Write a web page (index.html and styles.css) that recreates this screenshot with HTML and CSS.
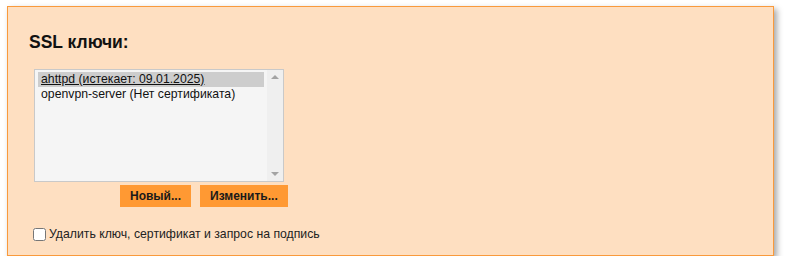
FILE: index.html
```html
<!DOCTYPE html>
<html lang="ru">
<head>
  <meta charset="UTF-8">
  <title>SSL ключи</title>
  <link rel="stylesheet" href="styles.css">
</head>
<body>

  <div class="panel">
    <h2>SSL ключи:</h2>

    <div class="keys">
      <div class="listbox">
        <ul class="options">
          <li class="option selected">ahttpd (истекает: 09.01.2025)</li>
          <li class="option">openvpn-server (Нет сертификата)</li>
        </ul>
        <div class="scrollbar">
          <span class="arrow up"></span>
          <span class="arrow down"></span>
        </div>
      </div>

      <div class="buttons">
        <button class="btn">Новый...</button>
        <button class="btn">Изменить...</button>
      </div>

      <label class="check">
        <input type="checkbox">
        Удалить ключ, сертификат и запрос на подпись
      </label>
    </div>
  </div>

</body>
</html>
```

FILE: styles.css
```css
body {
  margin: 0;
  font-family: "Liberation Sans", Arial, sans-serif;
  background: #fff;
}

.panel {
  box-sizing: border-box;
  width: 767px;
  height: 250px;
  margin: 6px 0 0 7px;
  padding: 24px 21px 0 21px;
  background-color: #fedfc1;
  border: 1px solid #f99a3c;
  box-shadow: 3px 3px 6px rgba(0, 0, 0, 0.35);
}

.panel h2 {
  margin: 0;
  font-size: 17.5px;
  line-height: 22px;
  font-weight: bold;
  color: #111;
}

.keys {
  margin: 16px 0 0 5px;
}

.listbox {
  display: flex;
  width: 250px;
  height: 113px;
  box-sizing: border-box;
  border: 1px solid #c9c9c9;
  background-color: #f5f5f5;
}

.options {
  flex: 1;
  list-style: none;
  margin: 0;
  padding: 2px 3px 0 3px;
}

.option {
  height: 15px;
  padding-left: 3px;
  font-size: 12.25px;
  line-height: 15px;
  color: #111;
  white-space: nowrap;
}

.option.selected {
  background-color: #cdcdcd;
  text-decoration: underline;
}

.scrollbar {
  width: 16px;
  display: flex;
  flex-direction: column;
  justify-content: space-between;
  align-items: center;
  padding: 5px 0;
  background-color: #efefef;
}

.arrow {
  width: 0;
  height: 0;
  border-left: 4px solid transparent;
  border-right: 4px solid transparent;
}

.arrow.up {
  border-bottom: 4px solid #a3a3a3;
}

.arrow.down {
  border-top: 4px solid #a3a3a3;
}

.buttons {
  display: flex;
  gap: 9px;
  margin: 3px 0 0 86px;
}

.btn {
  height: 22px;
  padding: 0 10px;
  border: none;
  background-color: #ff9933;
  font-family: "Liberation Sans", Arial, sans-serif;
  font-size: 12px;
  font-weight: bold;
  color: #1a1a1a;
}

.check {
  display: flex;
  align-items: center;
  margin: 20px 0 0 -1px;
  font-size: 12.25px;
  color: #222;
}

.check input {
  width: 13px;
  height: 13px;
  margin: 0 3px 0 0;
}
```
